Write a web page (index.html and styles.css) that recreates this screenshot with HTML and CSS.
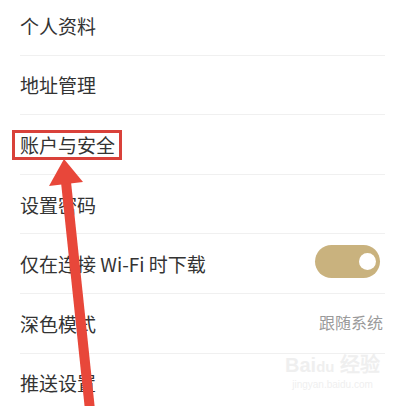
FILE: index.html
```html
<!DOCTYPE html>
<html lang="zh-CN">
<head>
    <meta charset="UTF-8">
    <meta name="viewport" content="width=device-width, initial-scale=1.0">
    <title>设置</title>
    <link rel="stylesheet" href="styles.css">
</head>
<body>
    <div class="page">
        <ul class="settings">
            <li class="row"><span>个人资料</span></li>
            <li class="row"><span>地址管理</span></li>
            <li class="row"><span class="marked">账户与安全</span></li>
            <li class="row"><span>设置密码</span></li>
            <li class="row">
                <span>仅在连接 Wi-Fi 时下载</span>
                <span class="switch on"><span class="knob"></span></span>
            </li>
            <li class="row">
                <span>深色模式</span>
                <span class="value">跟随系统</span>
            </li>
            <li class="row"><span>推送设置</span></li>
        </ul>

        <!-- annotation arrow -->
        <svg class="arrow" width="403" height="406" viewBox="0 0 403 406">
            <line x1="66" y1="182" x2="90" y2="410" stroke="#e8473a" stroke-width="10"/>
            <polygon points="64,159 49,186 83,182" fill="#e8473a"/>
        </svg>

        <div class="watermark">
            <div class="wm-logo">Bai<span class="wm-du">du</span> 经验</div>
            <div class="wm-url">jingyan.baidu.com</div>
        </div>
    </div>
</body>
</html>
```

FILE: styles.css
```css
body {
    margin: 0;
    background: #fff;
    color: #333;
    font-family: "Noto Sans CJK SC", "Noto Sans", sans-serif;
}

.page {
    position: relative;
    width: 403px;
    height: 406px;
    overflow: hidden;
}

.settings {
    list-style: none;
    margin: -4px 18px 0 20px;
    padding: 0;
}

.row {
    display: flex;
    align-items: center;
    justify-content: space-between;
    height: 57.6px;
    border-bottom: 1px solid #f0f0f0;
    font-size: 19px;
    line-height: 28px;
    padding-top: 1px;
}

.marked {
    position: relative;
}

.marked::after {
    content: "";
    position: absolute;
    top: -1px;
    bottom: -1px;
    left: -8px;
    right: -7px;
    border: 3px solid #d9413a;
}

.value {
    font-size: 16px;
    color: #9a9a9a;
    margin-right: 2px;
    margin-top: -4px;
}

.switch {
    display: flex;
    align-items: center;
    justify-content: flex-end;
    width: 65px;
    height: 33px;
    box-sizing: border-box;
    padding-right: 4px;
    margin-right: 5px;
    margin-top: -5px;
    border-radius: 17px;
    background: #c9b27e;
}

.knob {
    width: 17px;
    height: 17px;
    border-radius: 50%;
    background: #fff;
}

.arrow {
    position: absolute;
    top: 0;
    left: 0;
}

.watermark {
    position: absolute;
    left: 285px;
    top: 354px;
    color: #efefef;
    text-align: center;
    font-family: "Liberation Sans", sans-serif;
}

.wm-logo {
    font-size: 20px;
    font-weight: bold;
    line-height: 22px;
}

.wm-du {
    font-size: 15px;
}

.wm-url {
    font-size: 10px;
    line-height: 14px;
}
```
